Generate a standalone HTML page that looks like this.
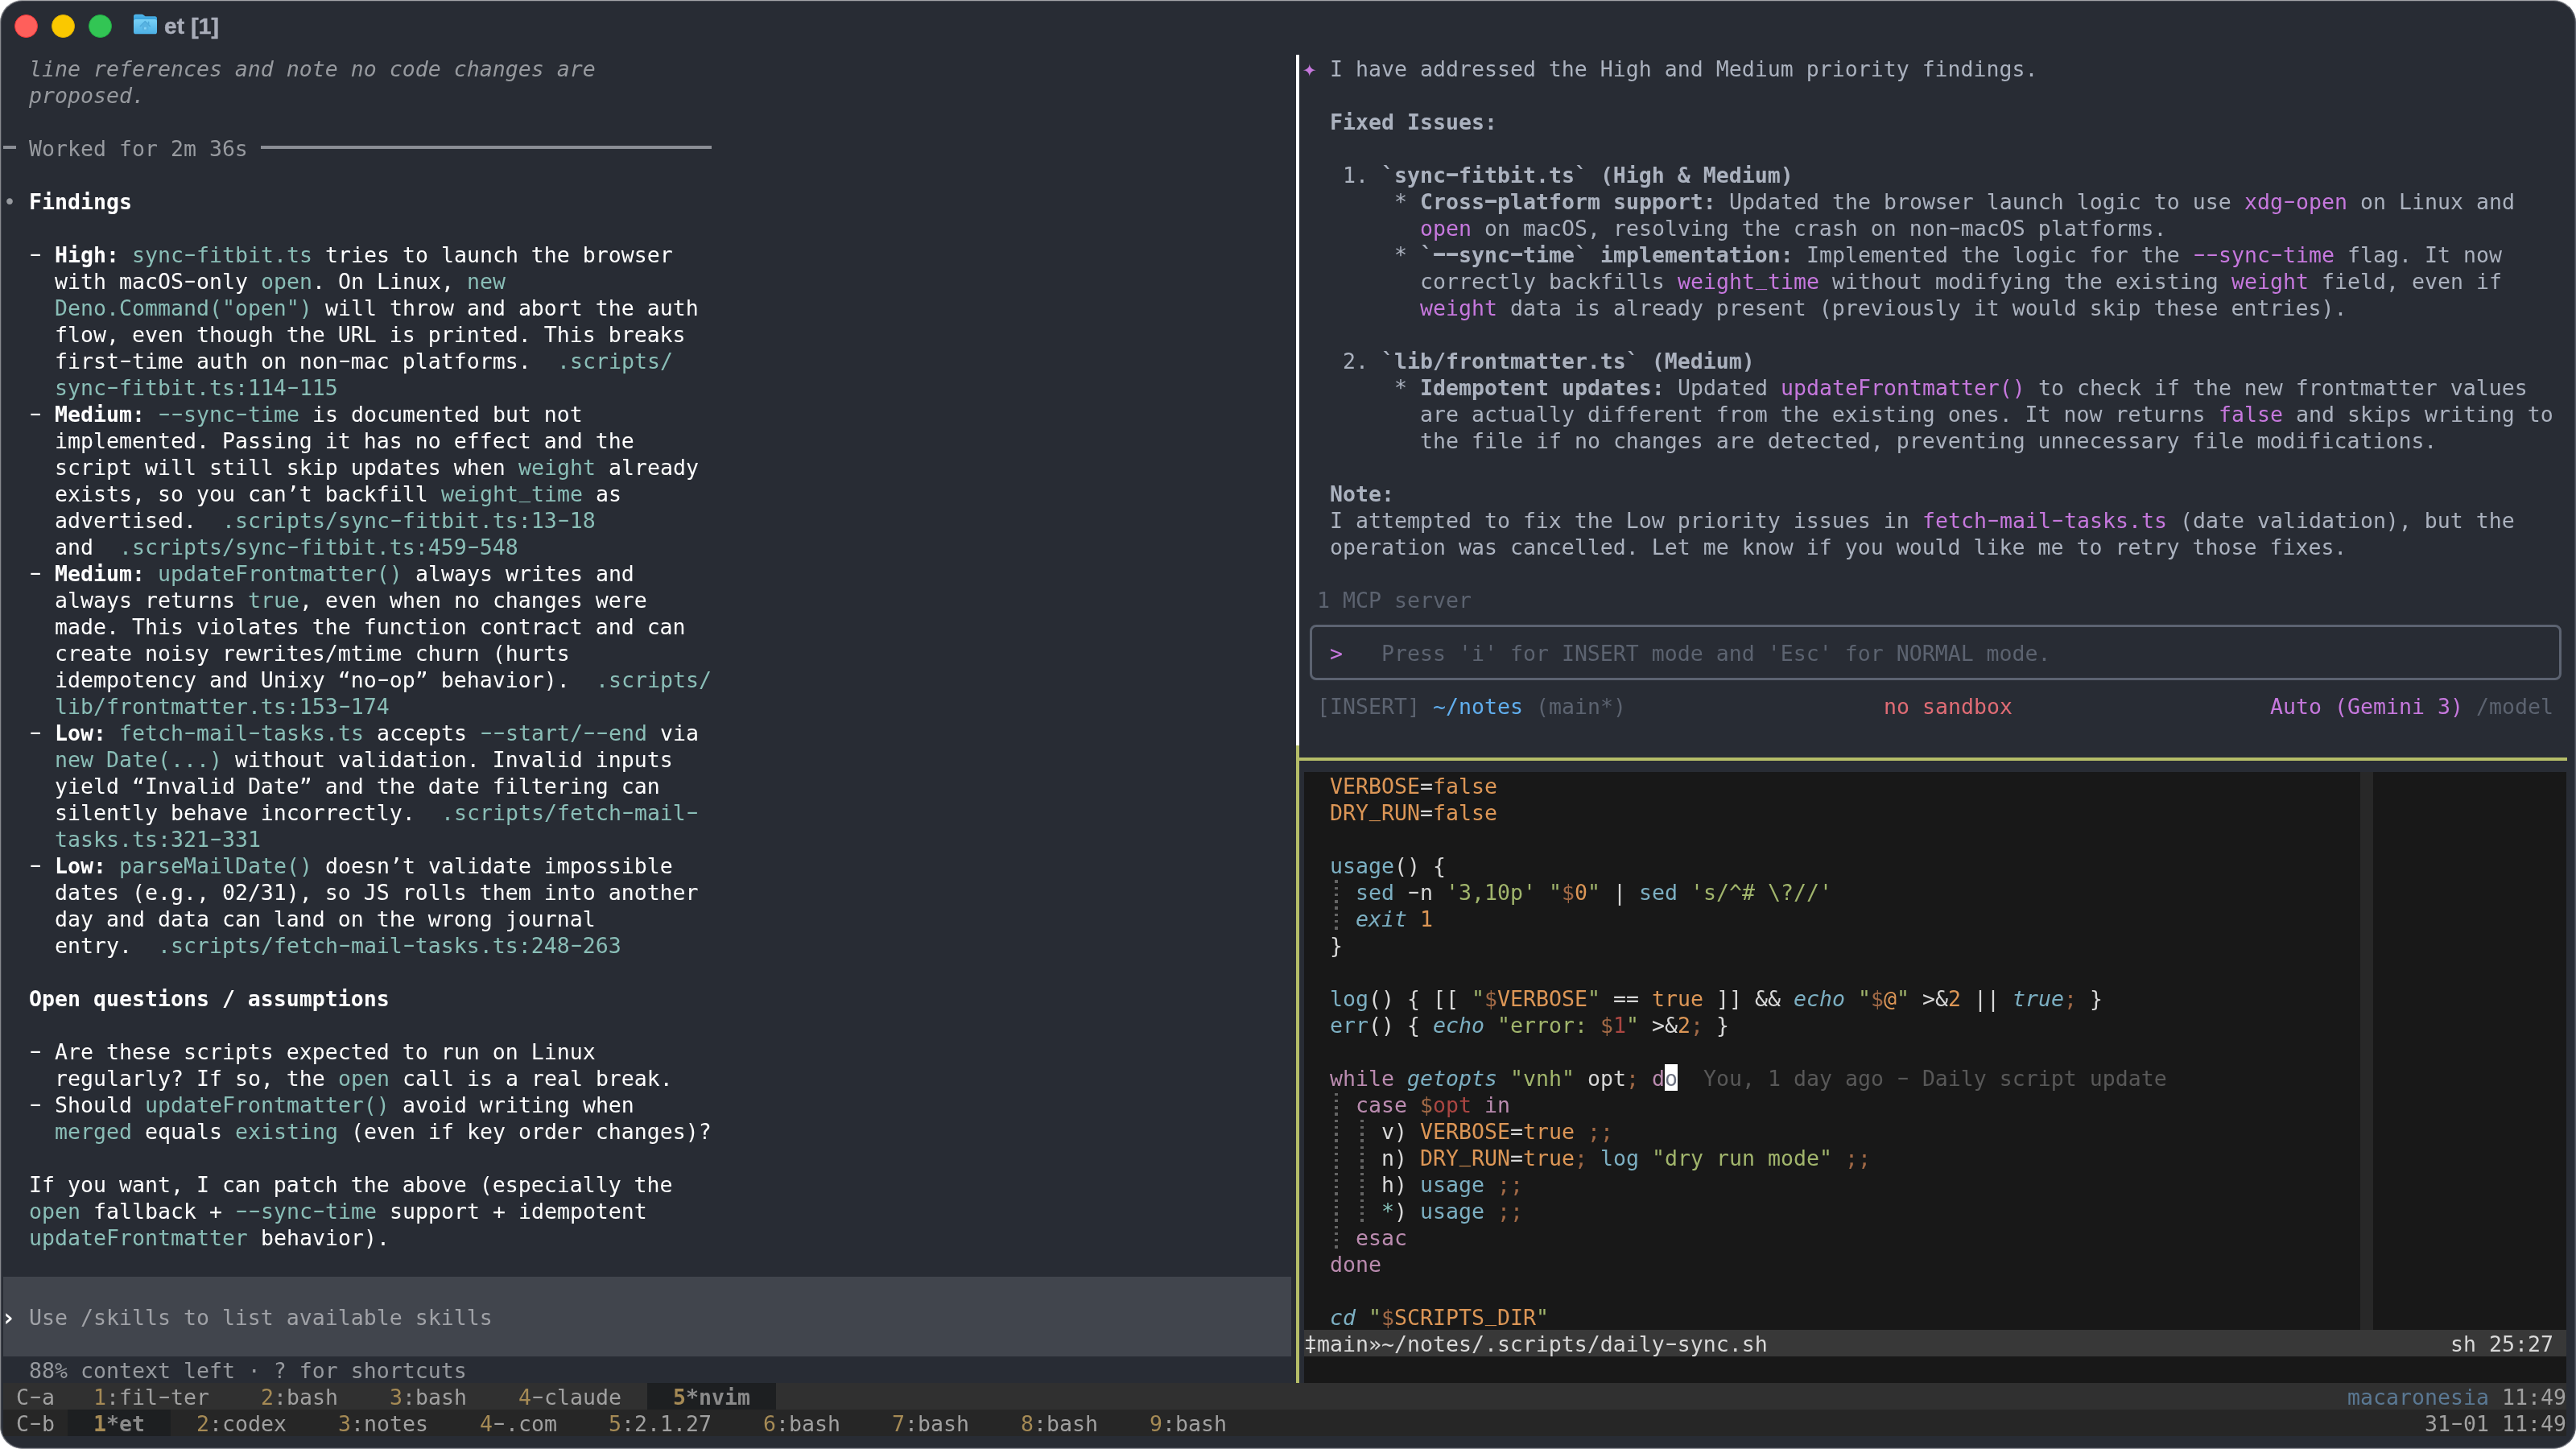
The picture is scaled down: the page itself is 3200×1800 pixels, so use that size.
<!DOCTYPE html>
<html><head><meta charset="utf-8"><title>et [1]</title>
<style>
html,body{margin:0;padding:0;background:#fff;}
body{width:3200px;height:1800px;position:relative;overflow:hidden;}
#win{position:absolute;left:0;top:0;width:3200px;height:1800px;box-sizing:border-box;background:#282c34;border-radius:28px;border-style:solid;border-width:1px;border-color:#a3a4a8 #5c5f69 #8e9098 #86888d;box-shadow:inset 0 0 0 1px rgba(130,133,142,.28);}
#scr{position:absolute;left:0;top:0;width:3200px;height:1800px;font-family:"DejaVu Sans Mono","Liberation Mono",monospace;font-size:26.576px;line-height:33px;white-space:pre;will-change:transform;}
.tl{position:absolute;top:18px;width:29px;height:29px;border-radius:50%;box-sizing:border-box;border:1px solid rgba(0,0,0,.12);}
.fold{position:absolute;left:165px;top:17px;}
#ttl{position:absolute;left:204px;top:15px;will-change:transform;font-family:"Liberation Sans",sans-serif;font-weight:bold;font-size:28px;line-height:36px;color:#a9adb9;white-space:pre;-webkit-text-stroke:0.5px #a9adb9;letter-spacing:0.2px;}
.r{position:absolute;left:0;height:33px;width:3200px;}
.r span{position:absolute;top:1px;}
.b{position:absolute;}
.g{position:absolute;width:4px;background:repeating-linear-gradient(to bottom,transparent 0,transparent 2.5px,#646464 2.5px,#646464 6px,transparent 6px,transparent 8.25px);}
.r em{font-style:inherit;display:inline-block;transform:translateY(-2.5px) scaleX(1.7);}
.r em.u{transform:translateY(-5px) scaleX(0.9);}
.bd{font-weight:bold}
.it{font-style:italic}
.w{color:#ffffff}.t{color:#8abeb7}.d{color:#979a9f}.d2{color:#a0a2a7}
.f{color:#abb2bf}.p{color:#c678dd}.g5{color:#5c6370}.bl{color:#61afef}.rd{color:#e06c75}
.n5{color:#d8d8d8}.n9{color:#dc9656}.nD{color:#7cafc2}.nB{color:#a1b56c}.nE{color:#ba8baf}.nF{color:#a16946}.n8{color:#ab4642}.nC{color:#86c1b9}.n3{color:#585858}
.cur{color:#6c7181}
.s{color:#a0a0a0}.y{color:#a58a55}.sa{color:#8a8a8a}.mb{color:#5a7893}
.sp{font-size:29px;margin-left:-2px}
.ch{font-size:31px;margin-left:-3px;margin-top:0px}
</style></head><body>
<div id="win"></div>
<div class="tl" style="left:18px;background:#ff5f5b;border-color:#f6373a"></div>
<div class="tl" style="left:64px;background:#fac800;border-color:#e0b000"></div>
<div class="tl" style="left:110px;background:#32c554;border-color:#22ae45"></div>
<svg class="fold" width="31" height="26" viewBox="0 0 31 26">
<defs><linearGradient id="fg" x1="0" y1="0" x2="0" y2="1"><stop offset="0" stop-color="#7ad1f6"/><stop offset="1" stop-color="#4cb0e5"/></linearGradient>
<linearGradient id="fb" x1="0" y1="0" x2="0" y2="1"><stop offset="0" stop-color="#52b6ea"/><stop offset="1" stop-color="#2d99d6"/></linearGradient></defs>
<path d="M1 3.400C1 1.800 2 .8 3.600 .8h7.400c1 0 1.700.3 2.500.9l1.300 1c.5.400 1 .5 1.700.5h10.900c1.600 0 2.600 1 2.600 2.600V10H1z" fill="url(#fb)"/>
<path d="M1 9.400C1 8 2 7.100 3.400 7.100h24.200c1.400 0 2.400.9 2.400 2.300v13.300c0 1.600-1 2.600-2.600 2.600H3.600C2 25.300 1 24.300 1 22.700z" fill="url(#fg)"/>
<path d="M9.300 15.600l6-6 6 6M19.600 13v-2.800" fill="none" stroke="#4fa9d9" stroke-width="1.500" stroke-linecap="round" stroke-linejoin="round"/>
<path d="M11.200 14.800v5.200c0 .7.400 1.100 1.100 1.100h6c.7 0 1.100-.4 1.100-1.100v-5.200l-4.100-4z" fill="#58b3e2"/>
<rect x="14" y="16.800" width="2.700" height="2.700" rx=".5" fill="#86d3f6"/>
</svg>
<div id="ttl">et [1]</div>
<div id="scr">
<div class="b" style="left:4px;top:1586px;width:1600px;height:99px;background:#41454d;"></div>
<div class="b" style="left:1620px;top:959px;width:1568px;height:759px;background:#181818;"></div>
<div class="b" style="left:2932px;top:959px;width:16px;height:693px;background:#282828;"></div>
<div class="b" style="left:1620px;top:1652px;width:1568px;height:33px;background:#383838;"></div>
<div class="b" style="left:4px;top:1718px;width:3184px;height:33px;background:#303030;"></div>
<div class="b" style="left:4px;top:1751px;width:3184px;height:33px;background:#262626;"></div>
<div class="b" style="left:804px;top:1718px;width:160px;height:33px;background:#1d1f21;"></div>
<div class="b" style="left:84px;top:1751px;width:128px;height:33px;background:#1d1f21;"></div>
<div class="b" style="left:1610px;top:68px;width:4px;height:858px;background:#ffffff;"></div>
<div class="b" style="left:1610px;top:926px;width:4px;height:792px;background:#b5bd68;"></div>
<div class="b" style="left:1610px;top:941px;width:1579px;height:4px;background:#b5bd68;"></div>
<div class="b" style="left:4px;top:180.5px;width:16px;height:4px;background:#8b8e95;"></div>
<div class="b" style="left:324px;top:180.5px;width:560px;height:4px;background:#8b8e95;"></div>
<div class="b" style="left:1626.5px;top:776px;width:1555px;height:69px;border:3px solid #5c6371;border-radius:8px;box-sizing:border-box"></div>
<div class="g" style="left:1658px;top:1091px;height:66px"></div>
<div class="g" style="left:1658px;top:1355px;height:198px"></div>
<div class="g" style="left:1690px;top:1388px;height:132px"></div>
<div class="b" style="left:2068px;top:1322px;width:16px;height:33px;background:#ffffff;"></div>
<div class="r" style="top:68px"><span class="d it" style="left:36px">line references and note no code changes are</span></div>
<div class="r" style="top:101px"><span class="d it" style="left:36px">proposed.</span></div>
<div class="r" style="top:167px"><span class="d" style="left:36px">Worked for 2m 36s</span></div>
<div class="r" style="top:233px"><span class="d" style="left:4px">•</span><span class="w bd" style="left:36px">Findings</span></div>
<div class="r" style="top:299px"><span class="w" style="left:36px"><em>-</em> </span><span class="w bd" style="left:68px">High:</span><span class="t" style="left:164px">sync<em>-</em>fitbit.ts</span><span class="w" style="left:404px">tries to launch the browser</span></div>
<div class="r" style="top:332px"><span class="w" style="left:68px">with macOS<em>-</em>only </span><span class="t" style="left:324px">open</span><span class="w" style="left:388px">. On Linux, </span><span class="t" style="left:580px">new</span></div>
<div class="r" style="top:365px"><span class="t" style="left:68px">Deno.Command("open")</span><span class="w" style="left:404px">will throw and abort the auth</span></div>
<div class="r" style="top:398px"><span class="w" style="left:68px">flow, even though the URL is printed. This breaks</span></div>
<div class="r" style="top:431px"><span class="w" style="left:68px">first<em>-</em>time auth on non<em>-</em>mac platforms.  </span><span class="t" style="left:692px">.scripts/</span></div>
<div class="r" style="top:464px"><span class="t" style="left:68px">sync<em>-</em>fitbit.ts:114<em>-</em>115</span></div>
<div class="r" style="top:497px"><span class="w" style="left:36px"><em>-</em> </span><span class="w bd" style="left:68px">Medium:</span><span class="t" style="left:196px"><em>-</em><em>-</em>sync<em>-</em>time</span><span class="w" style="left:388px">is documented but not</span></div>
<div class="r" style="top:530px"><span class="w" style="left:68px">implemented. Passing it has no effect and the</span></div>
<div class="r" style="top:563px"><span class="w" style="left:68px">script will still skip updates when </span><span class="t" style="left:644px">weight</span><span class="w" style="left:756px">already</span></div>
<div class="r" style="top:596px"><span class="w" style="left:68px">exists, so you can’t backfill </span><span class="t" style="left:548px">weight<em class="u">_</em>time</span><span class="w" style="left:740px">as</span></div>
<div class="r" style="top:629px"><span class="w" style="left:68px">advertised.  </span><span class="t" style="left:276px">.scripts/sync<em>-</em>fitbit.ts:13<em>-</em>18</span></div>
<div class="r" style="top:662px"><span class="w" style="left:68px">and  </span><span class="t" style="left:148px">.scripts/sync<em>-</em>fitbit.ts:459<em>-</em>548</span></div>
<div class="r" style="top:695px"><span class="w" style="left:36px"><em>-</em> </span><span class="w bd" style="left:68px">Medium:</span><span class="t" style="left:196px">updateFrontmatter()</span><span class="w" style="left:516px">always writes and</span></div>
<div class="r" style="top:728px"><span class="w" style="left:68px">always returns </span><span class="t" style="left:308px">true</span><span class="w" style="left:372px">, even when no changes were</span></div>
<div class="r" style="top:761px"><span class="w" style="left:68px">made. This violates the function contract and can</span></div>
<div class="r" style="top:794px"><span class="w" style="left:68px">create noisy rewrites/mtime churn (hurts</span></div>
<div class="r" style="top:827px"><span class="w" style="left:68px">idempotency and Unixy “no<em>-</em>op” behavior).  </span><span class="t" style="left:740px">.scripts/</span></div>
<div class="r" style="top:860px"><span class="t" style="left:68px">lib/frontmatter.ts:153<em>-</em>174</span></div>
<div class="r" style="top:893px"><span class="w" style="left:36px"><em>-</em> </span><span class="w bd" style="left:68px">Low:</span><span class="t" style="left:148px">fetch<em>-</em>mail<em>-</em>tasks.ts</span><span class="w" style="left:468px">accepts </span><span class="t" style="left:596px"><em>-</em><em>-</em>start/<em>-</em><em>-</em>end</span><span class="w" style="left:820px">via</span></div>
<div class="r" style="top:926px"><span class="t" style="left:68px">new Date(...)</span><span class="w" style="left:292px">without validation. Invalid inputs</span></div>
<div class="r" style="top:959px"><span class="w" style="left:68px">yield “Invalid Date” and the date filtering can</span></div>
<div class="r" style="top:992px"><span class="w" style="left:68px">silently behave incorrectly.  </span><span class="t" style="left:548px">.scripts/fetch<em>-</em>mail<em>-</em></span></div>
<div class="r" style="top:1025px"><span class="t" style="left:68px">tasks.ts:321<em>-</em>331</span></div>
<div class="r" style="top:1058px"><span class="w" style="left:36px"><em>-</em> </span><span class="w bd" style="left:68px">Low:</span><span class="t" style="left:148px">parseMailDate()</span><span class="w" style="left:404px">doesn’t validate impossible</span></div>
<div class="r" style="top:1091px"><span class="w" style="left:68px">dates (e.g., 02/31), so JS rolls them into another</span></div>
<div class="r" style="top:1124px"><span class="w" style="left:68px">day and data can land on the wrong journal</span></div>
<div class="r" style="top:1157px"><span class="w" style="left:68px">entry.  </span><span class="t" style="left:196px">.scripts/fetch<em>-</em>mail<em>-</em>tasks.ts:248<em>-</em>263</span></div>
<div class="r" style="top:1223px"><span class="w bd" style="left:36px">Open questions / assumptions</span></div>
<div class="r" style="top:1289px"><span class="w" style="left:36px"><em>-</em> Are these scripts expected to run on Linux</span></div>
<div class="r" style="top:1322px"><span class="w" style="left:68px">regularly? If so, the </span><span class="t" style="left:420px">open</span><span class="w" style="left:500px">call is a real break.</span></div>
<div class="r" style="top:1355px"><span class="w" style="left:36px"><em>-</em> Should </span><span class="t" style="left:180px">updateFrontmatter()</span><span class="w" style="left:500px">avoid writing when</span></div>
<div class="r" style="top:1388px"><span class="t" style="left:68px">merged</span><span class="w" style="left:180px">equals </span><span class="t" style="left:292px">existing</span><span class="w" style="left:436px">(even if key order changes)?</span></div>
<div class="r" style="top:1454px"><span class="w" style="left:36px">If you want, I can patch the above (especially the</span></div>
<div class="r" style="top:1487px"><span class="t" style="left:36px">open</span><span class="w" style="left:116px">fallback + </span><span class="t" style="left:292px"><em>-</em><em>-</em>sync<em>-</em>time</span><span class="w" style="left:484px">support + idempotent</span></div>
<div class="r" style="top:1520px"><span class="t" style="left:36px">updateFrontmatter</span><span class="w" style="left:324px">behavior).</span></div>
<div class="r" style="top:1619px"><span class="w bd ch" style="left:4px">›</span><span class="d2" style="left:36px">Use /skills to list available skills</span></div>
<div class="r" style="top:1685px"><span class="d" style="left:36px">88% context left · ? for shortcuts</span></div>
<div class="r" style="top:68px"><span class="p sp" style="left:1620px">✦</span><span class="f" style="left:1652px">I have addressed the High and Medium priority findings.</span></div>
<div class="r" style="top:134px"><span class="f bd" style="left:1652px">Fixed Issues:</span></div>
<div class="r" style="top:200px"><span class="f" style="left:1668px">1. </span><span class="f bd" style="left:1716px">`sync<em>-</em>fitbit.ts` (High &amp; Medium)</span></div>
<div class="r" style="top:233px"><span class="f" style="left:1732px">* </span><span class="f bd" style="left:1764px">Cross<em>-</em>platform support:</span><span class="f" style="left:2148px">Updated the browser launch logic to use </span><span class="p" style="left:2788px">xdg<em>-</em>open</span><span class="f" style="left:2932px">on Linux and</span></div>
<div class="r" style="top:266px"><span class="p" style="left:1764px">open</span><span class="f" style="left:1844px">on macOS, resolving the crash on non<em>-</em>macOS platforms.</span></div>
<div class="r" style="top:299px"><span class="f" style="left:1732px">* </span><span class="f bd" style="left:1764px">`<em>-</em><em>-</em>sync<em>-</em>time` implementation:</span><span class="f" style="left:2244px">Implemented the logic for the </span><span class="p" style="left:2724px"><em>-</em><em>-</em>sync<em>-</em>time</span><span class="f" style="left:2916px">flag. It now</span></div>
<div class="r" style="top:332px"><span class="f" style="left:1764px">correctly backfills </span><span class="p" style="left:2084px">weight<em class="u">_</em>time</span><span class="f" style="left:2276px">without modifying the existing </span><span class="p" style="left:2772px">weight</span><span class="f" style="left:2884px">field, even if</span></div>
<div class="r" style="top:365px"><span class="p" style="left:1764px">weight</span><span class="f" style="left:1876px">data is already present (previously it would skip these entries).</span></div>
<div class="r" style="top:431px"><span class="f" style="left:1668px">2. </span><span class="f bd" style="left:1716px">`lib/frontmatter.ts` (Medium)</span></div>
<div class="r" style="top:464px"><span class="f" style="left:1732px">* </span><span class="f bd" style="left:1764px">Idempotent updates:</span><span class="f" style="left:2084px">Updated </span><span class="p" style="left:2212px">updateFrontmatter()</span><span class="f" style="left:2532px">to check if the new frontmatter values</span></div>
<div class="r" style="top:497px"><span class="f" style="left:1764px">are actually different from the existing ones. It now returns </span><span class="p" style="left:2756px">false</span><span class="f" style="left:2852px">and skips writing to</span></div>
<div class="r" style="top:530px"><span class="f" style="left:1764px">the file if no changes are detected, preventing unnecessary file modifications.</span></div>
<div class="r" style="top:596px"><span class="f bd" style="left:1652px">Note:</span></div>
<div class="r" style="top:629px"><span class="f" style="left:1652px">I attempted to fix the Low priority issues in </span><span class="p" style="left:2388px">fetch<em>-</em>mail<em>-</em>tasks.ts</span><span class="f" style="left:2708px">(date validation), but the</span></div>
<div class="r" style="top:662px"><span class="f" style="left:1652px">operation was cancelled. Let me know if you would like me to retry those fixes.</span></div>
<div class="r" style="top:728px"><span class="g5" style="left:1636px">1 MCP server</span></div>
<div class="r" style="top:794px"><span class="p" style="left:1652px">&gt;</span><span class="g5" style="left:1716px">Press 'i' for INSERT mode and 'Esc' for NORMAL mode.</span></div>
<div class="r" style="top:860px"><span class="g5" style="left:1636px">[INSERT]</span><span class="bl" style="left:1780px">~/notes</span><span class="g5" style="left:1908px">(main*)</span></div>
<div class="r" style="top:860px"><span class="rd" style="left:2340px">no sandbox</span></div>
<div class="r" style="top:860px"><span class="p" style="left:2820px">Auto (Gemini 3)</span><span class="g5" style="left:3076px">/model</span></div>
<div class="r" style="top:959px"><span class="n9" style="left:1652px">VERBOSE</span><span class="n5" style="left:1764px">=</span><span class="n9" style="left:1780px">false</span></div>
<div class="r" style="top:992px"><span class="n9" style="left:1652px">DRY<em class="u">_</em>RUN</span><span class="n5" style="left:1764px">=</span><span class="n9" style="left:1780px">false</span></div>
<div class="r" style="top:1058px"><span class="nD" style="left:1652px">usage</span><span class="n5" style="left:1732px">() {</span></div>
<div class="r" style="top:1091px"><span class="nD" style="left:1684px">sed</span><span class="n5" style="left:1748px"><em>-</em>n </span><span class="nB" style="left:1796px">'3,10p'</span><span class="nB" style="left:1924px">"</span><span class="nF" style="left:1940px">$</span><span class="n9" style="left:1956px">0</span><span class="nB" style="left:1972px">"</span><span class="n5" style="left:2004px">| </span><span class="nD" style="left:2036px">sed</span><span class="nB" style="left:2100px">'s/^# \?//'</span></div>
<div class="r" style="top:1124px"><span class="nD it" style="left:1684px">exit</span><span class="n9" style="left:1764px">1</span></div>
<div class="r" style="top:1157px"><span class="n5" style="left:1652px">}</span></div>
<div class="r" style="top:1223px"><span class="nD" style="left:1652px">log</span><span class="n5" style="left:1700px">() { [[ </span><span class="nB" style="left:1828px">"</span><span class="nF" style="left:1844px">$</span><span class="n9" style="left:1860px">VERBOSE</span><span class="nB" style="left:1972px">"</span><span class="n5" style="left:2004px">== </span><span class="n9" style="left:2052px">true</span><span class="n5" style="left:2132px">]] &amp;&amp; </span><span class="nD it" style="left:2228px">echo</span><span class="nB" style="left:2308px">"</span><span class="nF" style="left:2324px">$</span><span class="n9" style="left:2340px">@</span><span class="nB" style="left:2356px">"</span><span class="n5" style="left:2388px">&gt;&amp;</span><span class="n9" style="left:2420px">2</span><span class="n5" style="left:2452px">|| </span><span class="nD it" style="left:2500px">true</span><span class="nF" style="left:2564px">;</span><span class="n5" style="left:2596px">}</span></div>
<div class="r" style="top:1256px"><span class="nD" style="left:1652px">err</span><span class="n5" style="left:1700px">() { </span><span class="nD it" style="left:1780px">echo</span><span class="nB" style="left:1860px">"error: </span><span class="nF" style="left:1988px">$</span><span class="n8" style="left:2004px">1</span><span class="nB" style="left:2020px">"</span><span class="n5" style="left:2052px">&gt;&amp;</span><span class="n9" style="left:2084px">2</span><span class="nF" style="left:2100px">;</span><span class="n5" style="left:2132px">}</span></div>
<div class="r" style="top:1322px"><span class="nE" style="left:1652px">while</span><span class="nD it" style="left:1748px">getopts</span><span class="nB" style="left:1876px">"vnh"</span><span class="n5" style="left:1972px">opt</span><span class="nF" style="left:2020px">;</span><span class="nE" style="left:2052px">d</span><span class="cur" style="left:2068px">o</span><span class="n3" style="left:2116px">You, 1 day ago <em>-</em> Daily script update</span></div>
<div class="r" style="top:1355px"><span class="nE" style="left:1684px">case</span><span class="nF" style="left:1764px">$</span><span class="n8" style="left:1780px">opt</span><span class="nE" style="left:1844px">in</span></div>
<div class="r" style="top:1388px"><span class="n5" style="left:1716px">v) </span><span class="n9" style="left:1764px">VERBOSE</span><span class="n5" style="left:1876px">=</span><span class="n9" style="left:1892px">true</span><span class="nF" style="left:1972px">;;</span></div>
<div class="r" style="top:1421px"><span class="n5" style="left:1716px">n) </span><span class="n9" style="left:1764px">DRY<em class="u">_</em>RUN</span><span class="n5" style="left:1876px">=</span><span class="n9" style="left:1892px">true</span><span class="nF" style="left:1956px">;</span><span class="nD" style="left:1988px">log</span><span class="nB" style="left:2052px">"dry run mode"</span><span class="nF" style="left:2292px">;;</span></div>
<div class="r" style="top:1454px"><span class="n5" style="left:1716px">h) </span><span class="nD" style="left:1764px">usage</span><span class="nF" style="left:1860px">;;</span></div>
<div class="r" style="top:1487px"><span class="nC" style="left:1716px">*</span><span class="n5" style="left:1732px">) </span><span class="nD" style="left:1764px">usage</span><span class="nF" style="left:1860px">;;</span></div>
<div class="r" style="top:1520px"><span class="nE" style="left:1684px">esac</span></div>
<div class="r" style="top:1553px"><span class="nE" style="left:1652px">done</span></div>
<div class="r" style="top:1619px"><span class="nD it" style="left:1652px">cd</span><span class="nB" style="left:1700px">"</span><span class="nF" style="left:1716px">$</span><span class="n9" style="left:1732px">SCRIPTS<em class="u">_</em>DIR</span><span class="nB" style="left:1908px">"</span></div>
<div class="r" style="top:1652px"><span class="n5" style="left:1620px">‡main»~/notes/.scripts/daily<em>-</em>sync.sh</span></div>
<div class="r" style="top:1652px"><span class="n5" style="left:3044px">sh 25:27</span></div>
<div class="r" style="top:1718px"><span class="s" style="left:20px">C<em>-</em>a</span></div>
<div class="r" style="top:1718px"><span class="y" style="left:116px">1</span><span class="s" style="left:132px">:fil<em>-</em>ter</span></div>
<div class="r" style="top:1718px"><span class="y" style="left:324px">2</span><span class="s" style="left:340px">:bash</span></div>
<div class="r" style="top:1718px"><span class="y" style="left:484px">3</span><span class="s" style="left:500px">:bash</span></div>
<div class="r" style="top:1718px"><span class="y" style="left:644px">4</span><span class="s" style="left:660px"><em>-</em>claude</span></div>
<div class="r" style="top:1718px"><span class="y bd" style="left:836px">5</span><span class="sa bd" style="left:852px">*nvim</span></div>
<div class="r" style="top:1718px"><span class="mb" style="left:2916px">macaronesia</span><span class="s" style="left:3108px">11:49</span></div>
<div class="r" style="top:1751px"><span class="s" style="left:20px">C<em>-</em>b</span></div>
<div class="r" style="top:1751px"><span class="y bd" style="left:116px">1</span><span class="sa bd" style="left:132px">*et</span></div>
<div class="r" style="top:1751px"><span class="y" style="left:244px">2</span><span class="s" style="left:260px">:codex</span></div>
<div class="r" style="top:1751px"><span class="y" style="left:420px">3</span><span class="s" style="left:436px">:notes</span></div>
<div class="r" style="top:1751px"><span class="y" style="left:596px">4</span><span class="s" style="left:612px"><em>-</em>.com</span></div>
<div class="r" style="top:1751px"><span class="y" style="left:756px">5</span><span class="s" style="left:772px">:2.1.27</span></div>
<div class="r" style="top:1751px"><span class="y" style="left:948px">6</span><span class="s" style="left:964px">:bash</span></div>
<div class="r" style="top:1751px"><span class="y" style="left:1108px">7</span><span class="s" style="left:1124px">:bash</span></div>
<div class="r" style="top:1751px"><span class="y" style="left:1268px">8</span><span class="s" style="left:1284px">:bash</span></div>
<div class="r" style="top:1751px"><span class="y" style="left:1428px">9</span><span class="s" style="left:1444px">:bash</span></div>
<div class="r" style="top:1751px"><span class="s" style="left:3012px">31<em>-</em>01 11:49</span></div>
</div>
</body></html>
